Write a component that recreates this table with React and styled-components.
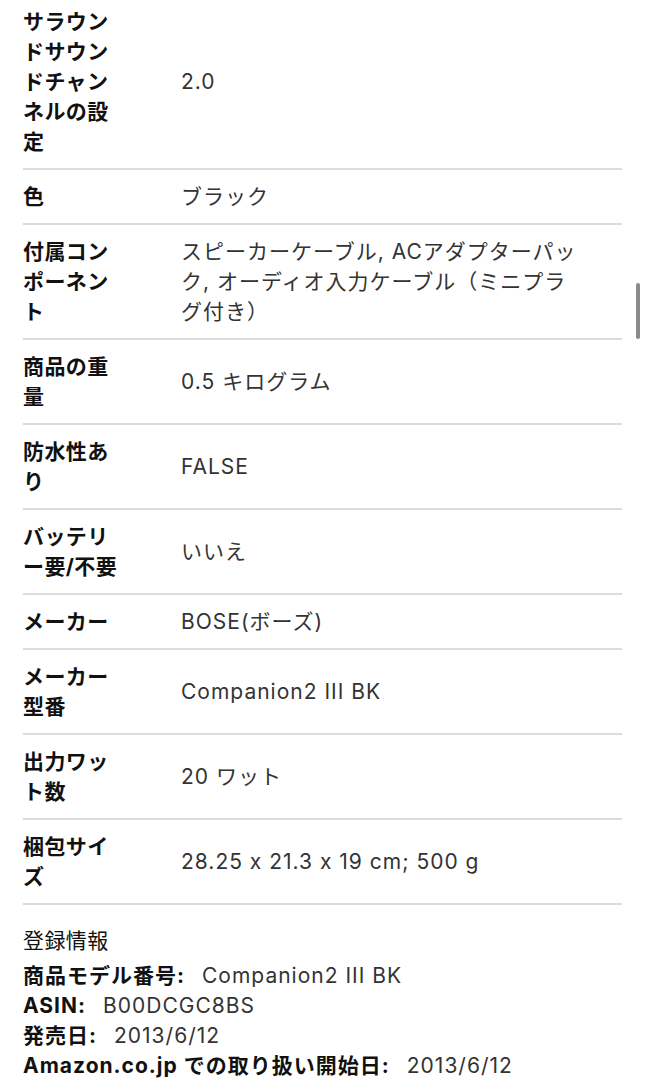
import React from "react";
import styled, { createGlobalStyle } from "styled-components";

const GlobalStyle = createGlobalStyle`
    html, body {
        margin: 0;
        padding: 0;
        background: #ffffff;
        overflow: hidden;
    }
    body {
        font-family: Inter, "Noto Sans CJK JP", sans-serif;
        -webkit-font-smoothing: antialiased;
    }
`;

const specs = [
    { label: "サラウンドサウンドチャンネルの設定", value: "2.0" },
    { label: "色", value: "ブラック" },
    {
        label: "付属コンポーネント",
        value: "スピーカーケーブル, ACアダプターパック, オーディオ入力ケーブル（ミニプラグ付き）",
    },
    { label: "商品の重量", value: "0.5 キログラム" },
    { label: "防水性あり", value: "FALSE" },
    { label: "バッテリー要/不要", value: "いいえ" },
    { label: "メーカー", value: "BOSE(ボーズ)" },
    { label: "メーカー型番", value: "Companion2 III BK" },
    { label: "出力ワット数", value: "20 ワット" },
    { label: "梱包サイズ", value: "28.25 x 21.3 x 19 cm; 500 g" },
];

const registration = [
    { label: "商品モデル番号:", value: "Companion2 III BK" },
    { label: "ASIN:", value: "B00DCGC8BS" },
    { label: "発売日:", value: "2013/6/12" },
    { label: "Amazon.co.jp での取り扱い開始日:", value: "2013/6/12" },
];

const App = () => {
    return (
        <>
            <GlobalStyle />
            <Page>
                <SpecTable>
                    {specs.map((row) => (
                        <SpecRow key={row.label}>
                            <SpecLabel>{row.label}</SpecLabel>
                            <SpecValue>{row.value}</SpecValue>
                        </SpecRow>
                    ))}
                </SpecTable>

                <Registration>
                    <SectionTitle>登録情報</SectionTitle>
                    {registration.map((item) => (
                        <InfoLine key={item.label}>
                            <InfoLabel>{item.label}</InfoLabel>
                            <InfoValue>{item.value}</InfoValue>
                        </InfoLine>
                    ))}
                </Registration>
            </Page>
            <ScrollThumb />
        </>
    );
};

// Styled Components
const Page = styled.div`
    margin-top: -5px;
    padding: 0 23px;
    font-size: 21px;
    line-height: 30px;
    letter-spacing: 0.4px;
`;

const SpecTable = styled.div`
    display: flex;
    flex-direction: column;
`;

const SpecRow = styled.div`
    display: grid;
    grid-template-columns: 102px 1fr;
    column-gap: 56px;
    align-items: center;
    padding: 12px 0 11px;
    border-bottom: 2px solid #dcdcdc;
`;

const SpecLabel = styled.div`
    font-weight: 700;
    color: #111111;
    word-break: break-all;
`;

const SpecValue = styled.div`
    color: #333333;
    padding-right: 40px;
    letter-spacing: 1px;
    word-break: break-all;
`;

const Registration = styled.div`
    padding-top: 21px;
`;

const SectionTitle = styled.div`
    color: #111111;
    margin-bottom: 5px;
`;

const InfoLine = styled.div`
    display: flex;
    align-items: baseline;
    gap: 17px;
    white-space: nowrap;
    letter-spacing: 1px;
`;

const InfoLabel = styled.span`
    font-weight: 700;
    color: #111111;
`;

const InfoValue = styled.span`
    color: #333333;
`;

const ScrollThumb = styled.div`
    position: fixed;
    top: 283px;
    right: 5px;
    width: 4px;
    height: 56px;
    border-radius: 2px;
    background: #8a8a8a;
`;

export default App;
